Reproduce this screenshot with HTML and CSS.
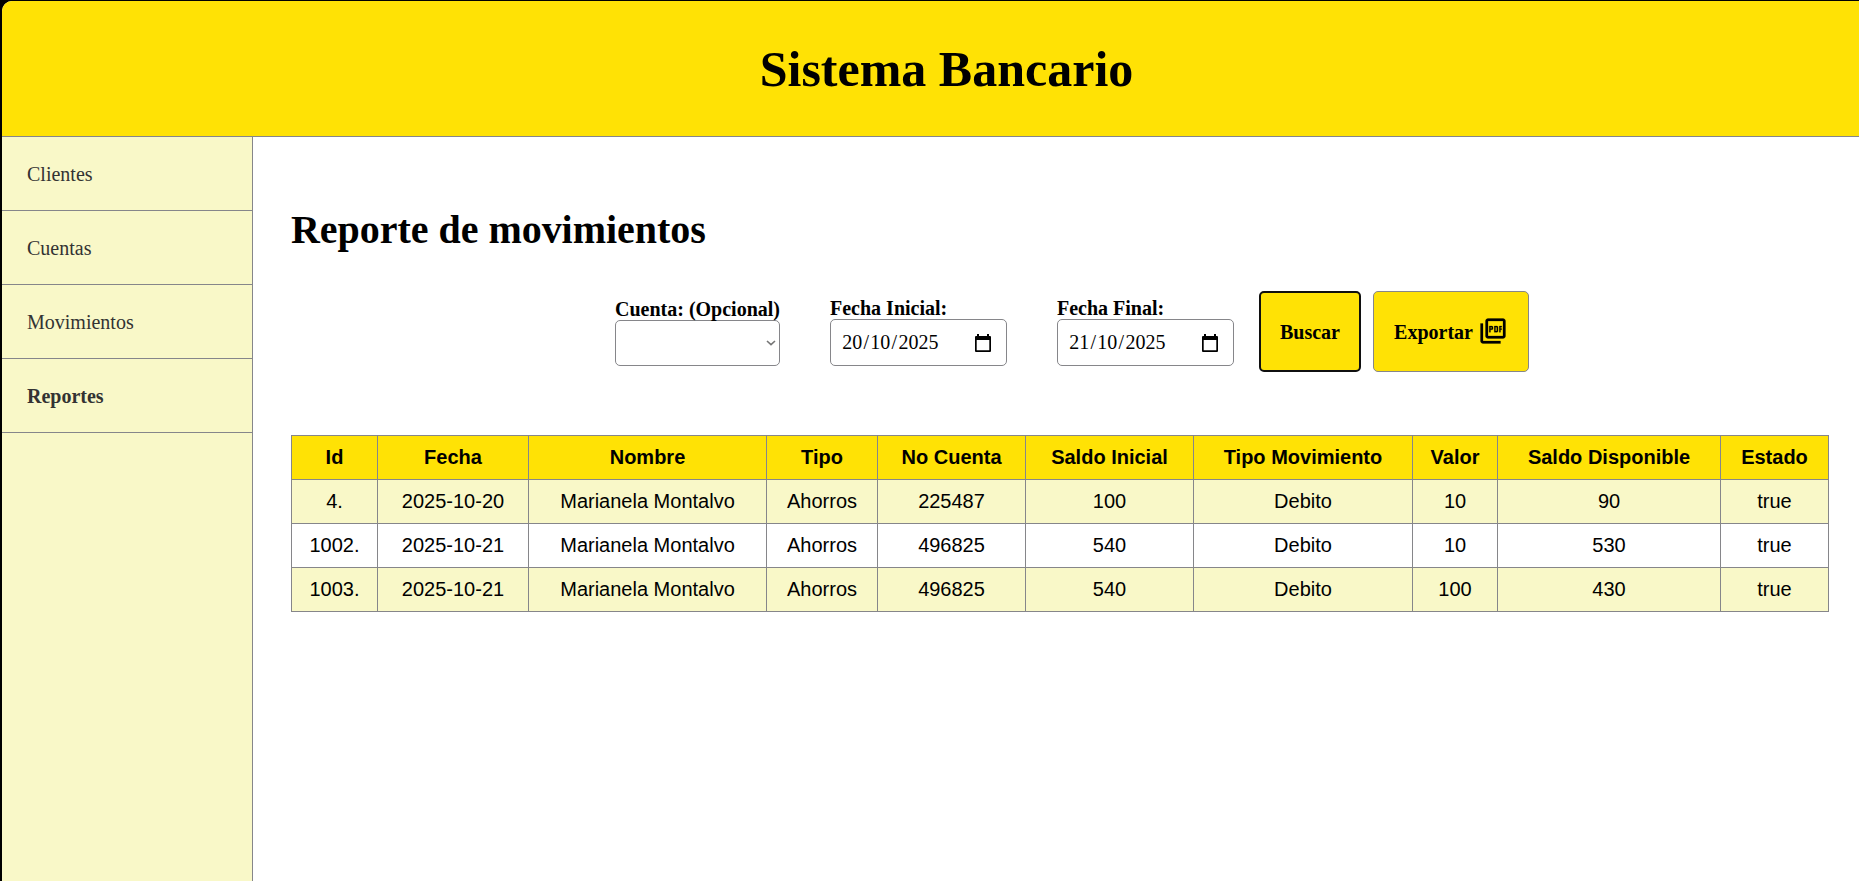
FILE: index.html
```html
<!DOCTYPE html>
<html lang="es">
<head>
<meta charset="utf-8">
<title>Sistema Bancario</title>
<link rel="stylesheet" href="styles.css">
</head>
<body>
<div class="app">
  <header class="header">Sistema Bancario</header>
  <div class="body">
    <nav class="sidebar">
      <a class="item">Clientes</a>
      <a class="item">Cuentas</a>
      <a class="item">Movimientos</a>
      <a class="item active">Reportes</a>
    </nav>
    <main class="content">
      <h1 class="title">Reporte de movimientos</h1>
      <form class="filters">
        <div class="field account">
          <label>Cuenta: (Opcional)</label>
          <div class="control select">
            <svg width="10" height="6" viewBox="0 0 10 6"><path d="M1 1l4 3.600L9 1" fill="none" stroke="#767676" stroke-width="1.600"/></svg>
          </div>
        </div>
        <div class="field date">
          <label>Fecha Inicial:</label>
          <div class="control input"><span class="value"><span>20</span>/<span>10</span>/<span>2025</span></span>
            <svg width="16" height="18" viewBox="0 0 16 18"><path d="M0 3a1 1 0 0 1 1-1h1V0h2v2h8V0h2v2h1a1 1 0 0 1 1 1v14a1 1 0 0 1-1 1H1a1 1 0 0 1-1-1zM1.700 6v10.300h12.600V6z" fill="#000" fill-rule="evenodd"/></svg>
          </div>
        </div>
        <div class="field date">
          <label>Fecha Final:</label>
          <div class="control input"><span class="value"><span>21</span>/<span>10</span>/<span>2025</span></span>
            <svg width="16" height="18" viewBox="0 0 16 18"><path d="M0 3a1 1 0 0 1 1-1h1V0h2v2h8V0h2v2h1a1 1 0 0 1 1 1v14a1 1 0 0 1-1 1H1a1 1 0 0 1-1-1zM1.700 6v10.300h12.600V6z" fill="#000" fill-rule="evenodd"/></svg>
          </div>
        </div>
        <button type="button" class="btn search">Buscar</button>
        <button type="button" class="btn export">Exportar
          <svg class="pdf" width="30" height="30" viewBox="0 0 24 24"><path d="M20 2H8c-1.100 0-2 .9-2 2v12c0 1.100.9 2 2 2h12c1.100 0 2-.9 2-2V4c0-1.100-.9-2-2-2zm0 14H8V4h12v12zM4 6H2v14c0 1.100.9 2 2 2h14v-2H4V6zm12 6V9c0-.550-.450-1-1-1h-2v5h2c.550 0 1-.450 1-1zm-2-3h1v3h-1V9zm4 2h1v-1h-1V9h1V8h-2v5h1zm-8 0h1c.550 0 1-.450 1-1V9c0-.550-.450-1-1-1H9v5h1v-2zm0-2h1v1h-1V9z"/></svg>
        </button>
      </form>
      <table class="table">
        <colgroup><col class="c1"><col class="c2"><col class="c3"><col class="c4"><col class="c5"><col class="c6"><col class="c7"><col class="c8"><col class="c9"><col class="c10"></colgroup>
        <thead><tr><th>Id</th><th>Fecha</th><th>Nombre</th><th>Tipo</th><th>No Cuenta</th><th>Saldo Inicial</th><th>Tipo Movimiento</th><th>Valor</th><th>Saldo Disponible</th><th>Estado</th></tr></thead>
        <tbody>
          <tr><td>4.</td><td>2025-10-20</td><td>Marianela Montalvo</td><td>Ahorros</td><td>225487</td><td>100</td><td>Debito</td><td>10</td><td>90</td><td>true</td></tr>
          <tr><td>1002.</td><td>2025-10-21</td><td>Marianela Montalvo</td><td>Ahorros</td><td>496825</td><td>540</td><td>Debito</td><td>10</td><td>530</td><td>true</td></tr>
          <tr><td>1003.</td><td>2025-10-21</td><td>Marianela Montalvo</td><td>Ahorros</td><td>496825</td><td>540</td><td>Debito</td><td>100</td><td>430</td><td>true</td></tr>
        </tbody>
      </table>
    </main>
  </div>
</div>
</body>
</html>
```
FILE: styles.css
```css
* { box-sizing: border-box; }
html { background: #000; overflow: hidden; }
body {
  margin: 0;
  height: 881px;
  padding: 1px 0 0 2px;
  overflow: hidden;
  font: 20px/23px "Liberation Serif", "Times New Roman", serif;
  color: #000;
}
.app {
  height: 880px;
  display: flex;
  flex-direction: column;
  background: #fff;
  border-top-left-radius: 10px;
  overflow: hidden;
}
.header {
  height: 136px;
  flex: none;
  padding-top: 39px;
  padding-right: 39px;
  padding-left: 71px;
  background: #ffe205;
  border-bottom: 1px solid #86868a;
  font-size: 50px;
  line-height: 58px;
  font-weight: bold;
  text-align: center;
}
.body { flex: 1; display: flex; }
.sidebar {
  width: 251px;
  flex: none;
  background: #f9f8c8;
  border-right: 1px solid #86868a;
}
.item {
  display: flex;
  align-items: center;
  height: 74px;
  padding: 1px 0 0 25px;
  border-bottom: 1px solid #86868a;
  color: #333;
}
.active { font-weight: bold; }
.content { flex: 1; padding: 70px 30px 0 38px; }
.title { margin: 0; font-size: 40px; line-height: 46px; letter-spacing: -0.03px; }
.filters {
  display: flex;
  height: 82px;
  margin-top: 38px;
  padding-left: 324px;
}
.field { padding-top: 5px; }
.field label { display: block; height: 23px; line-height: 25px; font-weight: bold; white-space: nowrap; }
.account { width: 165px; margin-right: 50px; padding-top: 6px; }
.date { width: 177px; margin-right: 50px; }
.date + .date { margin-right: 25px; }
.control {
  display: flex;
  align-items: center;
  justify-content: space-between;
  height: 47px;
  border: 1px solid #86868a;
  border-radius: 5px;
  background: #fff;
}
.select { height: 46px; justify-content: flex-end; padding-right: 3px; }
.input { padding: 0 15px 0 10px; }
.value span { padding: 0 1.25px; }
.btn {
  display: flex;
  align-items: center;
  justify-content: center;
  height: 81px;
  padding: 1px 0 0;
  background: #ffe205;
  border: 1px solid #86868a;
  border-radius: 5px;
  font: bold 20px/23px "Liberation Serif", "Times New Roman", serif;
  color: #000;
}
.search { width: 102px; margin-right: 12px; border: 2px solid #101010; }
.export { width: 156px; gap: 5px; }
.pdf { margin-bottom: 3px; stroke: #000; stroke-width: 0.2; }
.table {
  width: 1538px;
  margin-top: 62px;
  table-layout: fixed;
  border-collapse: collapse;
  font: 20px/23px "Liberation Sans", Arial, sans-serif;
  text-align: center;
}
.table th, .table td { height: 44px; padding: 0; border: 1px solid #86868a; }
.table th { background: #ffe205; }
.table tbody tr:nth-child(odd) { background: #f9f8c8; }
.c1 { width: 86px; }
.c2 { width: 151px; }
.c3 { width: 238px; }
.c4 { width: 111px; }
.c5 { width: 148px; }
.c6 { width: 168px; }
.c7 { width: 219px; }
.c8 { width: 85px; }
.c9 { width: 223px; }
.c10 { width: 108px; }
```
